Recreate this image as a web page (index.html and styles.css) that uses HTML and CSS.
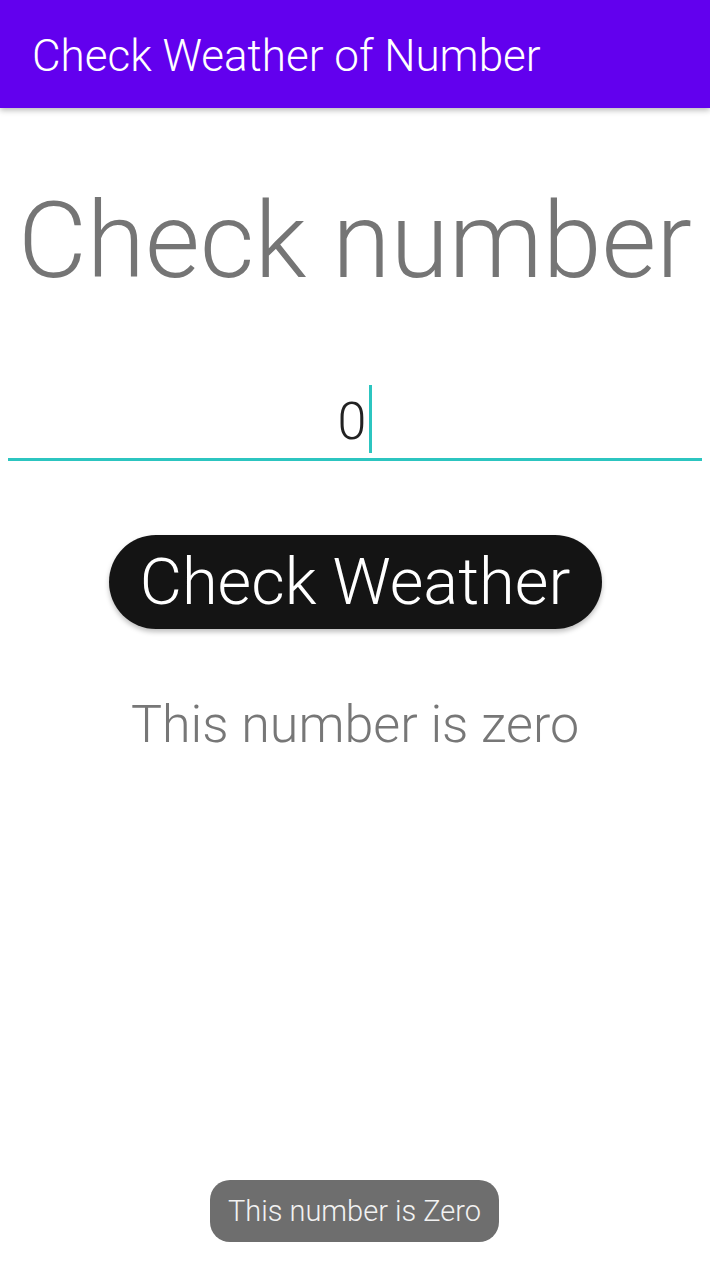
FILE: index.html
```html
<!DOCTYPE html>
<html>
<head>
<meta charset="utf-8">
<link rel="stylesheet" href="styles.css">
</head>
<body>
<header class="appbar"><span class="appbar-title">Check Weather of Number</span></header>
<main class="content">
  <h1 class="heading">Check number</h1>
  <div class="field">
    <span class="field-value">0</span><span class="cursor"></span>
  </div>
  <button class="btn">Check Weather</button>
  <p class="result">This number is zero</p>
</main>
<div class="toast">This number is Zero</div>
</body>
</html>
```
FILE: styles.css
```css
html, body {
  margin: 0;
  padding: 0;
  background: #ffffff;
}
body {
  width: 710px;
  height: 1280px;
  position: relative;
  overflow: hidden;
  font-family: Roboto, "Noto Sans", sans-serif;
}
.appbar {
  height: 108px;
  background: #6200ee;
  display: flex;
  align-items: center;
  padding-left: 32px;
  padding-top: 3px;
  box-sizing: border-box;
  box-shadow: 0 2px 6px rgba(0,0,0,0.3);
  position: relative;
  z-index: 1;
}
.appbar-title {
  color: #ffffff;
  font-size: 44px;
  font-weight: 300;
}
.content {
  display: flex;
  flex-direction: column;
  align-items: center;
}
.heading {
  margin: 80px 0 0 0;
  font-size: 106px;
  font-weight: 300;
  color: #757575;
  line-height: 1;
  white-space: nowrap;
}
.field {
  margin-top: 86px;
  width: 694px;
  height: 78px;
  border-bottom: 3px solid #2cc5c0;
  display: flex;
  justify-content: center;
  align-items: flex-end;
}
.field-value {
  font-size: 52px;
  font-weight: 300;
  color: #222222;
  line-height: 1;
  margin-bottom: 10px;
}
.cursor {
  width: 3px;
  height: 68px;
  background: #2cc5c0;
  margin-left: 3px;
  margin-bottom: 5px;
}
.btn {
  margin-top: 74px;
  width: 493px;
  height: 94px;
  border: none;
  border-radius: 47px;
  background: #141414;
  color: #ffffff;
  font-family: Roboto, "Noto Sans", sans-serif;
  font-size: 65px;
  font-weight: 300;
  box-shadow: 0 3px 5px rgba(0,0,0,0.25);
  padding: 0;
}
.result {
  margin: 70px 0 0 0;
  font-size: 52px;
  font-weight: 300;
  color: #777777;
  line-height: 1;
}
.toast {
  position: absolute;
  left: 210px;
  top: 1180px;
  width: 289px;
  height: 62px;
  border-radius: 20px;
  background: #6e6e6e;
  color: #f2f2f2;
  font-size: 29px;
  font-weight: 300;
  display: flex;
  align-items: center;
  justify-content: center;
}
```
